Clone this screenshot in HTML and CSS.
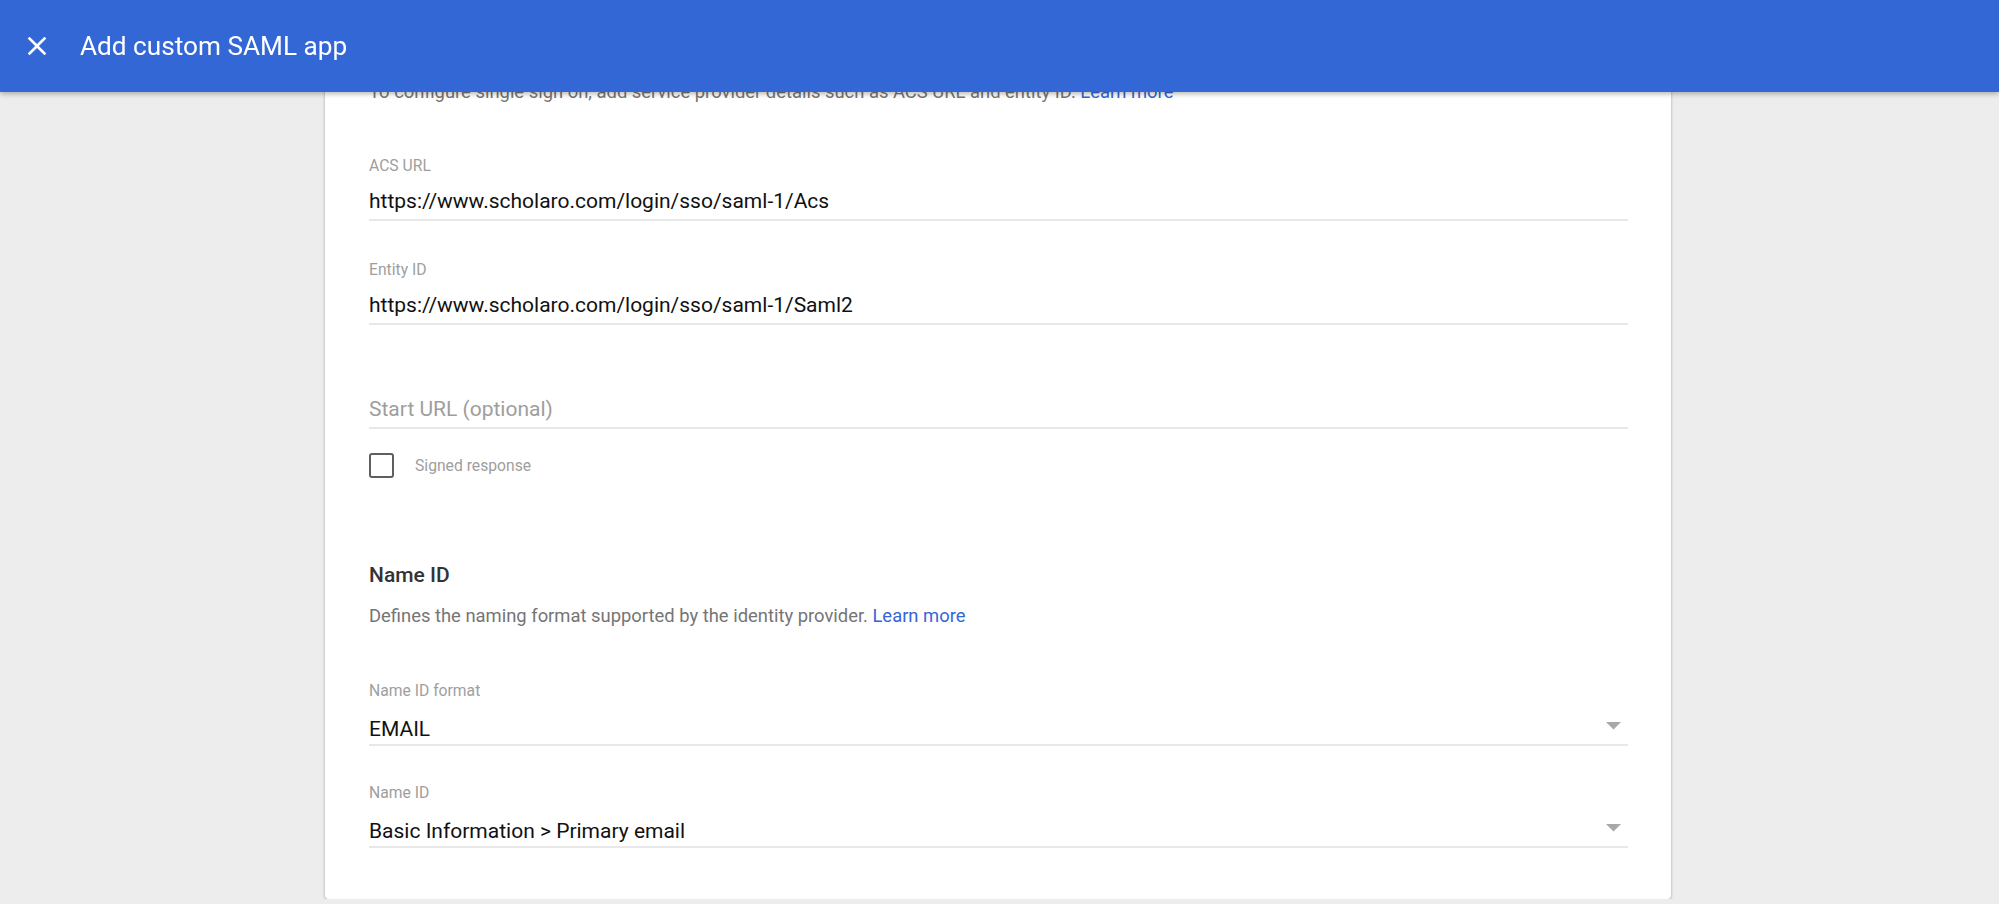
FILE: index.html
```html
<!DOCTYPE html>
<html lang="en">
<head>
    <meta charset="UTF-8">
    <meta name="viewport" content="width=device-width, initial-scale=1.0">
    <title>Add custom SAML app</title>
    <link rel="stylesheet" href="styles.css">
</head>
<body>
    <header class="topbar">
        <button class="close-btn" aria-label="Close">
            <svg width="32" height="32" viewBox="0 0 24 24"><path d="M19 6.41L17.59 5 12 10.59 6.41 5 5 6.41 10.59 12 5 17.59 6.41 19 12 13.41 17.59 19 19 17.59 13.41 12z" fill="#fff"/></svg>
        </button>
        <h1>Add custom SAML app</h1>
    </header>

    <main class="page">
        <section class="card">
            <p class="hint">To configure single sign on, add service provider details such as ACS URL and entity ID. <a href="#">Learn more</a></p>

            <div class="field">
                <label class="field-label" for="acsUrl">ACS URL</label>
                <input class="field-input" type="text" id="acsUrl" value="https://www.scholaro.com/login/sso/saml-1/Acs">
            </div>

            <div class="field">
                <label class="field-label" for="entityId">Entity ID</label>
                <input class="field-input" type="text" id="entityId" value="https://www.scholaro.com/login/sso/saml-1/Saml2">
            </div>

            <div class="field field-bare">
                <input class="field-input" type="text" id="startUrl" placeholder="Start URL (optional)">
            </div>

            <label class="check-row">
                <span class="check-box"></span>
                <span class="check-text">Signed response</span>
            </label>

            <h2 class="section-title">Name ID</h2>
            <p class="hint hint-tight">Defines the naming format supported by the identity provider. <a href="#">Learn more</a></p>

            <div class="field field-select">
                <span class="field-label">Name ID format</span>
                <div class="select">
                    <span>EMAIL</span>
                    <svg class="arrow" width="15" height="8" viewBox="0 0 15 8"><path d="M0 0h15L7.5 7.5z" fill="#a8a8a8"/></svg>
                </div>
            </div>

            <div class="field field-select next">
                <span class="field-label">Name ID</span>
                <div class="select">
                    <span>Basic Information &gt; Primary email</span>
                    <svg class="arrow" width="15" height="8" viewBox="0 0 15 8"><path d="M0 0h15L7.5 7.5z" fill="#a8a8a8"/></svg>
                </div>
            </div>
        </section>
    </main>
</body>
</html>
```

FILE: styles.css
```css
body {
    margin: 0;
    font-family: Roboto, 'Noto Sans', Arial, sans-serif;
    background-color: #ededed;
    color: #212121;
    overflow: hidden;
}
.topbar {
    position: fixed;
    top: 0;
    left: 0;
    right: 0;
    height: 92px;
    z-index: 10;
    display: flex;
    align-items: center;
    padding-left: 21px;
    background-color: #3367d6;
    box-shadow: 0 2px 5px rgba(0,0,0,0.28);
}
.close-btn {
    display: flex;
    width: 32px;
    height: 32px;
    padding: 0;
    border: 0;
    background: none;
    cursor: pointer;
}
.topbar h1 {
    margin: 0 0 0 27px;
    color: #fff;
    font-size: 26.2px;
    font-weight: 400;
    line-height: 32px;
}
.page {
    width: 1346px;
    margin: 0 0 0 325px;
}
.card {
    background-color: #fff;
    border-radius: 0 0 4px 4px;
    padding: 80px 43px 51px 44px;
    box-shadow: 0 1px 3px rgba(0,0,0,0.32);
}
.hint {
    margin: 0;
    font-size: 18.4px;
    line-height: 24px;
    color: #757575;
}
.hint a {
    color: #3367d6;
    text-decoration: none;
}
.hint-tight {
    margin-top: 15px;
}
.field {
    display: flex;
    flex-direction: column;
    margin-top: 39px;
}
.hint + .field {
    margin-top: 52px;
}
.field-bare {
    padding-top: 20px;
}
.field-label {
    font-size: 15.7px;
    line-height: 20px;
    color: #9e9e9e;
}
.field-input {
    box-sizing: border-box;
    width: 100%;
    height: 45px;
    padding: 12px 0 5px;
    border: 0;
    border-bottom: 2px solid #e8e8e8;
    outline: none;
    font-family: inherit;
    font-size: 21px;
    line-height: 26px;
    color: #111;
    background: none;
}
.field-input::placeholder {
    color: #9e9e9e;
}
.check-row {
    display: flex;
    align-items: center;
    gap: 21px;
    height: 25px;
    margin-top: 24px;
}
.check-box {
    box-sizing: border-box;
    width: 25px;
    height: 25px;
    border: 2.5px solid #5f5f5f;
    border-radius: 3px;
}
.check-text {
    font-size: 15.7px;
    color: #9e9e9e;
}
.section-title {
    margin: 83px 0 0;
    font-size: 21px;
    font-weight: 500;
    line-height: 28px;
    color: #333;
}
.hint + .field-select {
    margin-top: 53px;
}
.field-select.next {
    margin-top: 37px;
}
.select {
    box-sizing: border-box;
    display: flex;
    align-items: center;
    justify-content: space-between;
    height: 45px;
    padding: 15px 7px 2px 0;
    border-bottom: 2px solid #e8e8e8;
    font-size: 21px;
    line-height: 26px;
    color: #111;
}
.arrow {
    margin-bottom: 6px;
}
```
